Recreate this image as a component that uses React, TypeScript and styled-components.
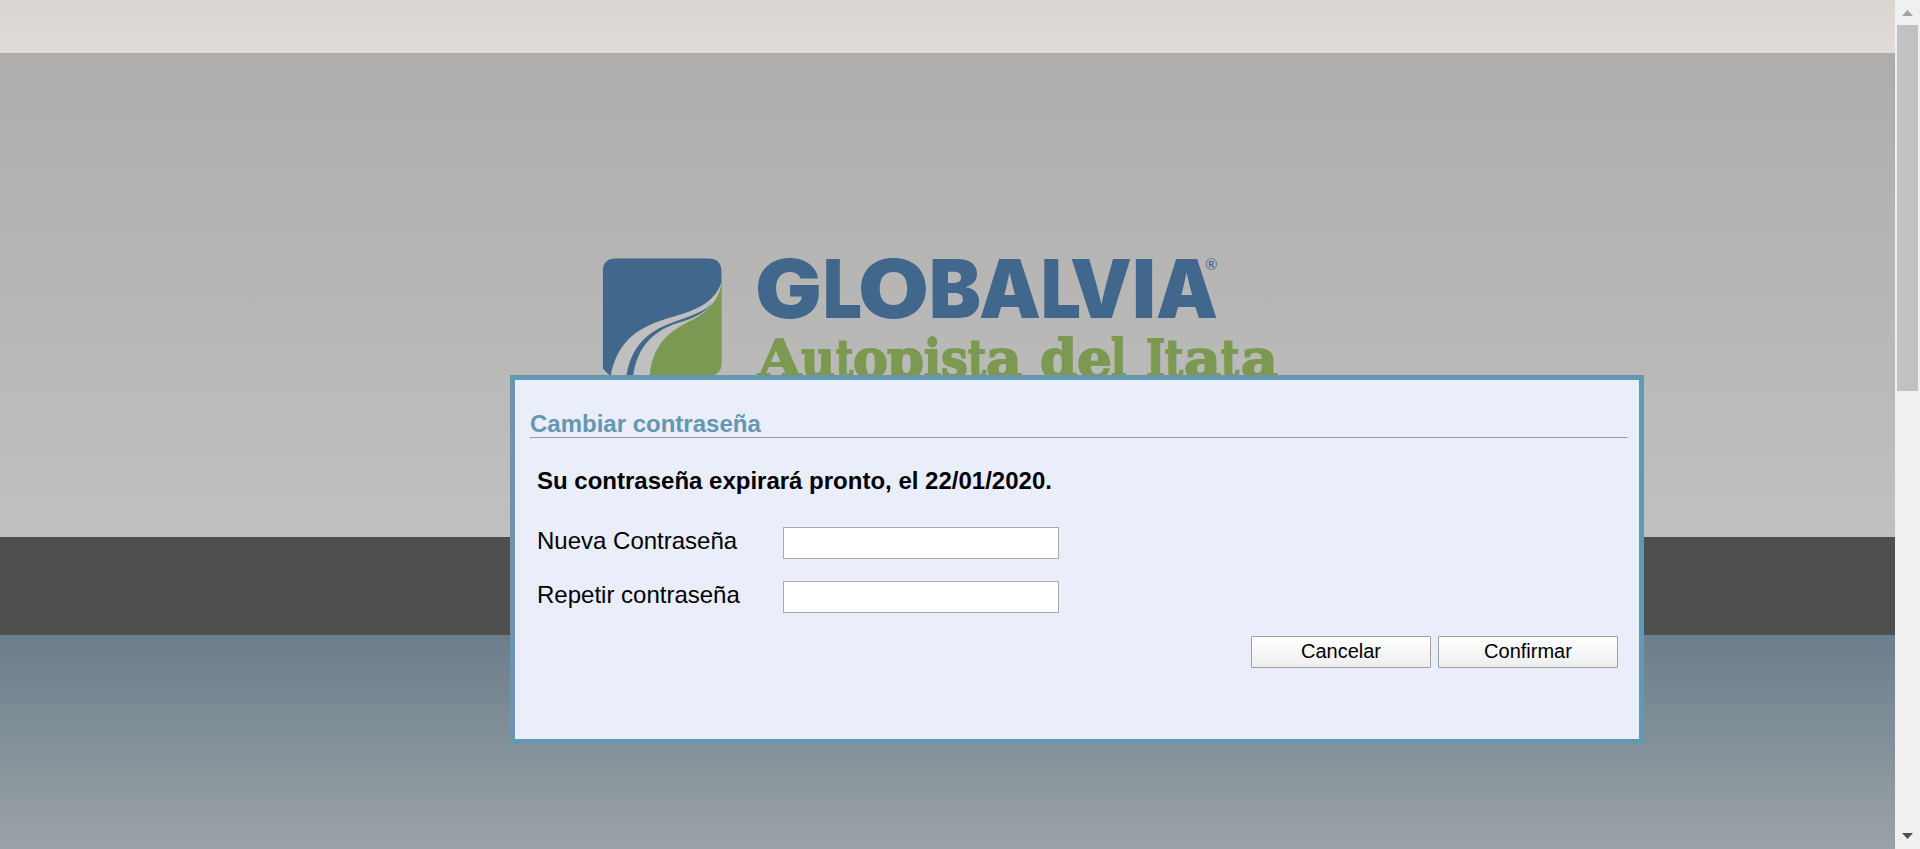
import React from "react";
import styled, { createGlobalStyle } from "styled-components";

const GlobalStyle = createGlobalStyle`
  html, body { margin: 0; padding: 0; overflow: hidden; }
  * { box-sizing: border-box; }
  body { font-family: "Liberation Sans", Arial, sans-serif; color: #000; }
`;

const Screen = styled.div`
  position: relative;
  display: flex;
  width: 1920px;
  height: 849px;
  overflow: hidden;
`;

const Page = styled.div`
  flex: 1;
  display: flex;
  flex-direction: column;
`;

const TopBand = styled.header`
  height: 53px;
  background: linear-gradient(#dcd6d1, #e0dcd8);
`;

const HeroBand = styled.main`
  height: 484px;
  padding: 197px 0 0 590px;
  background: linear-gradient(#aeadab, #c0c0c0);
`;

const DarkBand = styled.div`
  height: 98px;
  background: #4f4f50;
`;

const FooterBand = styled.footer`
  flex: 1;
  background: linear-gradient(#6b7e8b, #9ba2a7);
`;

const LogoArt = styled.svg`
  display: block;
`;

const Brand = styled.text`
  font-family: Inter, sans-serif;
  font-weight: 900;
  font-size: 81.5px;
  fill: #41678d;
`;

const Concession = styled.text`
  font-family: "DejaVu Serif", serif;
  font-weight: bold;
  font-size: 53px;
  fill: #7b9950;
  stroke: #7b9950;
  stroke-width: 1.8px;
`;

const ScrollTrack = styled.aside`
  width: 25px;
  background: #f0f0f0;
  display: flex;
  flex-direction: column;
  align-items: center;
`;

const ScrollThumb = styled.div`
  width: 21px;
  height: 366px;
  margin-bottom: auto;
  background: #c1c1c1;
`;

const ScrollButton = styled.svg`
  display: block;
  width: 25px;
  height: 25px;
`;

const Dialog = styled.section`
  position: absolute;
  left: 510px;
  top: 375px;
  width: 1134px;
  height: 369px;
  padding: 30px 11px 0 15px;
  border: 5px solid #6498b1;
  background: #eaeefa;
  display: flex;
  flex-direction: column;
`;

const Title = styled.h1`
  margin: 0;
  height: 27px;
  font-size: 24px;
  line-height: 27px;
  font-weight: bold;
  color: #6498b1;
`;

const Rule = styled.hr`
  width: 100%;
  height: 2px;
  margin: 0;
  border: 1px solid;
  border-color: #9a9a9a #eeeeee #eeeeee #9a9a9a;
`;

const Message = styled.p`
  margin: 28px 0 0 7px;
  font-size: 24px;
  line-height: 28px;
  font-weight: bold;
`;

const Fields = styled.div`
  display: grid;
  grid-template-columns: 246px 276px;
  row-gap: 22px;
  margin: 32px 0 0 7px;
`;

const Label = styled.label`
  font-size: 24px;
  line-height: 28px;
`;

const Input = styled.input`
  width: 276px;
  height: 32px;
  padding: 0 4px;
  border: 1px solid #a9a9a9;
  background: #fff;
  outline: none;
`;

const Actions = styled.div`
  display: flex;
  justify-content: flex-end;
  gap: 7px;
  margin: 23px 10px 0 0;
`;

const Button = styled.button`
  width: 180px;
  height: 32px;
  padding: 0 0 1px;
  border: 1px solid #a0a0a0;
  border-radius: 1px;
  background: linear-gradient(#ffffff, #eeeeee);
  font: 20px "Liberation Sans", Arial, sans-serif;
  color: #000;
`;

type Glyph = [letter: string, x: number, width: number];

const brandGlyphs: Glyph[] = [
  ["G", 755, 67],
  ["L", 823, 39],
  ["O", 858, 71],
  ["B", 929, 52],
  ["A", 979, 62],
  ["L", 1041, 40],
  ["V", 1070, 62],
  ["I", 1132, 24],
  ["A", 1156, 62],
];

const concessionGlyphs: Glyph[] = [
  ["A", 758, 43],
  ["u", 801, 34],
  ["t", 836, 17],
  ["o", 853, 35],
  ["p", 887, 37],
  ["i", 924, 17],
  ["s", 941, 27],
  ["t", 968, 18],
  ["a", 986, 36],
  [" ", 1022, 18],
  ["d", 1040, 37],
  ["e", 1077, 35],
  ["l", 1111, 15],
  [" ", 1126, 20],
  ["I", 1146, 19],
  ["t", 1165, 18],
  ["a", 1184, 37],
  ["t", 1221, 18],
  ["a", 1241, 37],
];

function Glyphs({ items }: { items: Glyph[] }) {
  return (
    <>
      {items.map(([letter, x, width], i) => (
        <tspan key={i} x={x} textLength={width} lengthAdjust="spacingAndGlyphs">
          {letter}
        </tspan>
      ))}
    </>
  );
}

function Logo() {
  return (
    <LogoArt width="700" height="125" viewBox="590 250 700 125">
      <defs>
        <clipPath id="mark">
          <path d="M82 55 H352 Q395 55 395 98 V365 Q395 408 352 408 H60 L38 385 V95 Q38 55 82 55 Z" />
        </clipPath>
      </defs>
      <g transform="translate(590 240) scale(0.33333)">
        <g clipPath="url(#mark)">
          <rect x="30" y="50" width="370" height="360" fill="#41678d" />
          <path
            d="M395 125 C382 165 355 192 300 214 C210 247 90 255 62 410 H400 Z"
            fill="#bfbfbf"
          />
          <path
            d="M367 188 C350 210 315 223 268 240 C190 266 125 303 109 410 H129 C140 330 180 277 260 250 C310 235 350 216 367 188 Z"
            fill="#41678d"
          />
          <path
            d="M397 122 C388 178 358 213 305 241 C245 271 188 305 179 410 H400 Z"
            fill="#7b9950"
          />
        </g>
      </g>
      <Brand y="317.5">
        <Glyphs items={brandGlyphs} />
      </Brand>
      <text x="1205" y="270" fontFamily="Lato, sans-serif" fontSize="15" fill="#41678d">
        ®
      </text>
      <Concession y="376.5" xmlSpace="preserve">
        <Glyphs items={concessionGlyphs} />
      </Concession>
    </LogoArt>
  );
}

export default function App() {
  return (
    <>
      <GlobalStyle />
      <Screen>
        <Page>
          <TopBand />
          <HeroBand>
            <Logo />
          </HeroBand>
          <DarkBand />
          <FooterBand />
        </Page>
        <ScrollTrack>
          <ScrollButton viewBox="0 0 25 25">
            <path d="M7 16 L12.5 10 L18 16 Z" fill="#a3a3a3" />
          </ScrollButton>
          <ScrollThumb />
          <ScrollButton viewBox="0 0 25 25">
            <path d="M7 9 H18 L12.5 15 Z" fill="#505050" />
          </ScrollButton>
        </ScrollTrack>
        <Dialog>
          <Title>Cambiar contraseña</Title>
          <Rule />
          <Message>Su contraseña expirará pronto, el 22/01/2020.</Message>
          <Fields>
            <Label htmlFor="new">Nueva Contraseña</Label>
            <Input id="new" type="password" />
            <Label htmlFor="repeat">Repetir contraseña</Label>
            <Input id="repeat" type="password" />
          </Fields>
          <Actions>
            <Button>Cancelar</Button>
            <Button>Confirmar</Button>
          </Actions>
        </Dialog>
      </Screen>
    </>
  );
}
